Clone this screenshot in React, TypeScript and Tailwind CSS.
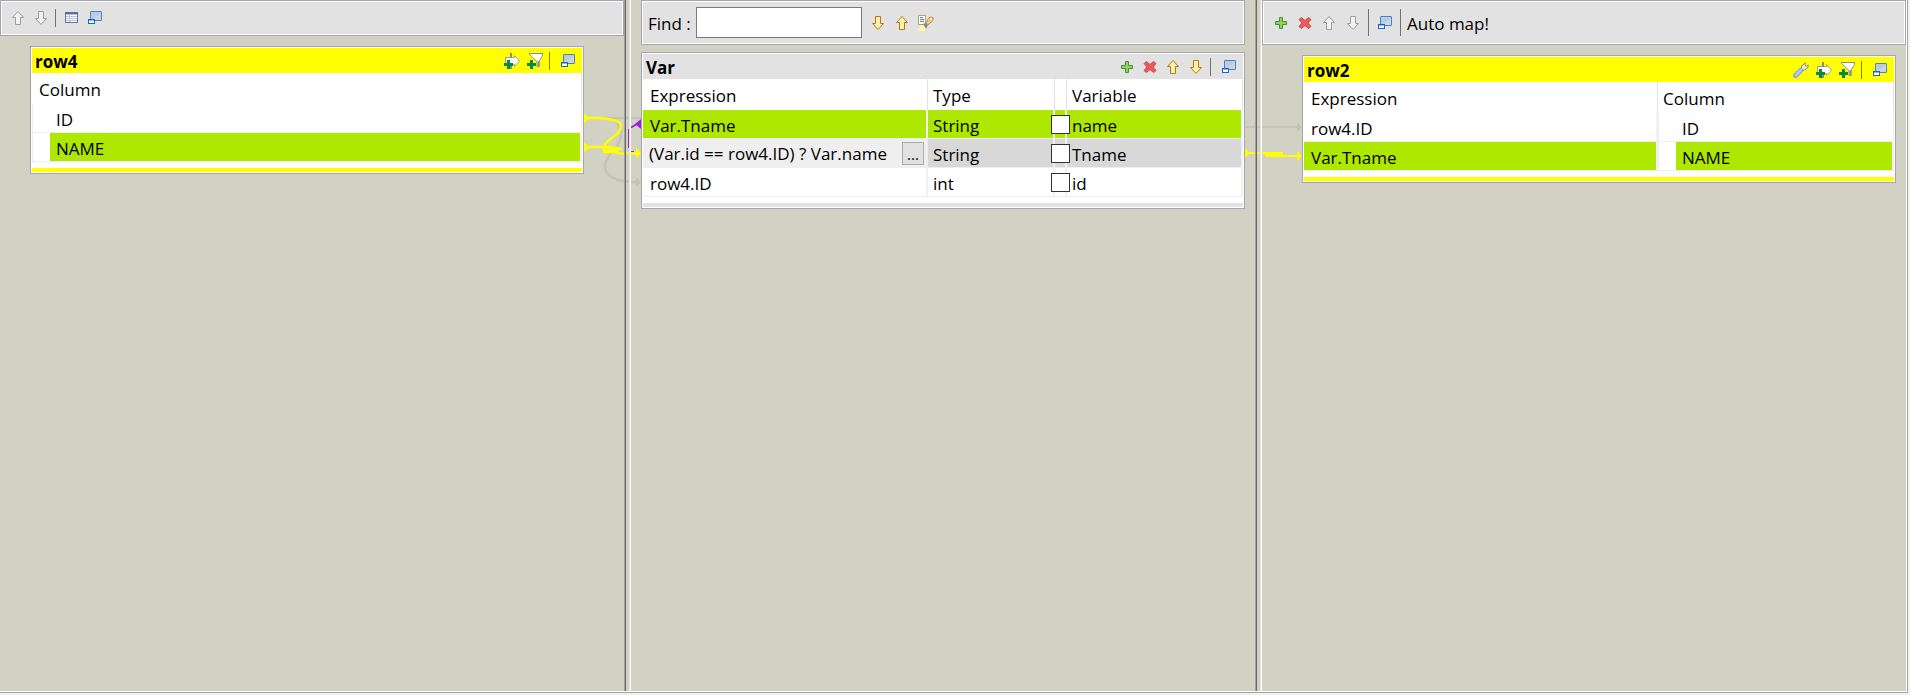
import React from "react";

type Tone = "gold" | "gray";

function Arrow({ dir, tone }: { dir: "up" | "down"; tone: Tone }) {
  const stroke = tone === "gold" ? "#b87a10" : "#9c9c9c";
  const fill = tone === "gold" ? "#fff0b0" : "#f2f2f2";
  const d =
    dir === "up"
      ? "M8 1.5 L13.5 7.5 H10.5 V14.5 H5.5 V7.5 H2.5 Z"
      : "M8 14.5 L13.5 8.5 H10.5 V1.5 H5.5 V8.5 H2.5 Z";
  return (
    <svg width="16" height="16" viewBox="0 0 16 16" aria-hidden="true">
      <path d={d} fill={fill} stroke={stroke} strokeLinejoin="round" />
    </svg>
  );
}

function Plus() {
  return (
    <svg width="16" height="16" viewBox="0 0 16 16" aria-hidden="true">
      <path d="M6.5 2.5h3v4h4v3h-4v4h-3v-4h-4v-3h4z" fill="#9fd04c" stroke="#3a9050" />
    </svg>
  );
}

function Cross() {
  return (
    <svg width="16" height="16" viewBox="0 0 16 16" aria-hidden="true">
      <path
        d="M4.5 2.5 L8 5.5 L11.5 2.5 L14 4.5 L11 8 L14 11.5 L11.5 13.5 L8 10.5 L4.5 13.5 L2 11.5 L5 8 L2 4.5 Z"
        fill="#ee5a5c"
        stroke="#d04a4c"
        strokeLinejoin="round"
      />
    </svg>
  );
}

function Restore() {
  return (
    <svg width="16" height="16" viewBox="0 0 16 16" aria-hidden="true">
      <rect x="3.5" y="1.5" width="11" height="9" rx="0.5" fill="#b9cbe0" stroke="#4a82c4" />
      <path d="M4 10 L14 3 V10z" fill="#cdd5de" />
      <rect x="1.5" y="9.5" width="6" height="4" fill="#fff" stroke="#1464d2" />
      <path d="M1 10h7" stroke="#1464d2" />
    </svg>
  );
}

function TableIcon() {
  return (
    <svg width="16" height="16" viewBox="0 0 16 16" aria-hidden="true">
      <rect x="1.5" y="2.5" width="12" height="10" fill="#fff" stroke="#60789f" />
      <path d="M1 3h13" stroke="#5d6f94" strokeWidth="2" />
      <path d="M2 4.5h11" stroke="#b4c0d4" />
      <path d="M2 6.5h11M2 8.5h11M2 10.5h11M5.5 4v8" stroke="#b9c5d8" />
    </svg>
  );
}

function AddArrow() {
  return (
    <svg width="16" height="16" viewBox="0 0 16 16" aria-hidden="true">
      <path d="M1.5 4.5H10.5V2.5L15.5 8L10.5 13.5V11.5H1.5z" fill="#fff" stroke="#a3a38a" />
      <path d="M7 0v5M7 12v4" stroke="#8c8c7a" strokeWidth="2" />
      <path d="M4.5 7v9M0 11.5h9" stroke="#078c3c" strokeWidth="3" />
    </svg>
  );
}

function AddFilter() {
  return (
    <svg width="16" height="16" viewBox="0 0 16 16" aria-hidden="true">
      <path d="M2.5 0.5H15.5V2.5L12 8.5V13.5H10V8.5L2.5 1.5Z" fill="#fff" stroke="#929286" />
      <path d="M2 0.5h14" stroke="#8e8e84" />
      <path d="M11.5 8v6" stroke="#8e8e84" strokeWidth="2" />
      <path d="M4.5 7v9M0 11.5h9" stroke="#078c3c" strokeWidth="3" />
    </svg>
  );
}

function Wrench() {
  return (
    <svg width="16" height="16" viewBox="0 0 16 16" aria-hidden="true">
      <path
        d="M8 8 L9 3.5 L12.5 0.8 L12 3.2 L13.4 4.2 L15.5 3.2 L14.6 6.2 L11.5 7.8 L9 9.2Z"
        fill="#e7e7e0"
        stroke="#918f80"
        strokeLinejoin="round"
      />
      <path d="M2.6 13.4 L7.6 8.4" stroke="#7f9fce" strokeWidth="5" strokeLinecap="round" />
      <path d="M2.8 13.2 L7.6 8.4" stroke="#b0caf0" strokeWidth="3" strokeLinecap="round" />
    </svg>
  );
}

function Highlight() {
  return (
    <svg width="16" height="16" viewBox="0 0 16 16" aria-hidden="true">
      <path d="M0.5 0.5h7v9h-7z" fill="#fff" stroke="#b8a060" />
      <path d="M2 2.5h3M2 4.5h4M2 6.5h4" stroke="#5a80bc" />
      <path d="M0 16 L2 11 L6 10 L8 12 L7 16Z" fill="#fff6b8" />
      <path d="M5 9 L8 7.5 L10 10 L8 14Z" fill="#8b8b8b" />
      <path d="M8.5 8.5 L9.5 4.5 L12 2 L15 2.5 L15 5.5 L12 8 L10 10Z" fill="#f3c385" stroke="#ca8c48" />
      <circle cx="13" cy="4" r="1" fill="#fff" />
    </svg>
  );
}

function Tool({ label, disabled, children }: { label: string; disabled?: boolean; children: React.ReactNode }) {
  return (
    <button type="button" aria-label={label} title={label} disabled={disabled} className="block size-4 shrink-0">
      {children}
    </button>
  );
}

function Divider({ className }: { className: string }) {
  return <span className={`-ml-px w-px shrink-0 bg-black/50 ${className}`} />;
}

function Toolbar({ className, children }: { className: string; children: React.ReactNode }) {
  return (
    <div
      className={`flex items-center border border-[#a5a5ad] bg-[#e2e2e2] shadow-[inset_0_0_0_1px_#fff] ${className}`}
    >
      {children}
    </div>
  );
}

function Card({
  title,
  tone,
  tools,
  className,
  children,
}: {
  title: string;
  tone: "yellow" | "gray";
  tools: React.ReactNode;
  className: string;
  children: React.ReactNode;
}) {
  const bar = tone === "yellow" ? "bg-[#ffff00]" : "bg-[#e2e2e2]";
  return (
    <section className={`border border-[#a5a5ad] bg-white p-px ${className}`}>
      <header className={`flex h-[25px] items-center justify-between pr-1.5 pl-[3px] ${bar}`}>
        <h2 className="pt-0.5 text-[17px] leading-6 font-bold">{title}</h2>
        <div className="flex items-center gap-[7px]">
          {tools}
          <Divider className="mr-[3px] h-[18px]" />
          <Tool label={`Minimize ${title}`}>
            <Restore />
          </Tool>
        </div>
      </header>
      {children}
      <div className={`mt-1.5 h-1 ${bar}`} />
    </section>
  );
}

const table = "w-full table-fixed border-separate border-spacing-0";
const th = "h-[31px] border-r border-[#e2e2e6] p-0 pt-0.5 text-left font-normal";
const td = "h-[29px] border-r-2 border-b border-r-[#edf1f8] border-b-[#ededf0] bg-clip-padding p-0 pt-1";
const first = "pl-[7px]";
const next = "pl-[5px]";
const green = "bg-[#aee800]";
const gray = "bg-[#d8d8d8]";

function ColumnCell({ name, selected }: { name: string; selected?: boolean }) {
  return (
    <td className="h-[29px] border-r border-b border-l border-[#ededf0] p-0 pr-px pl-[17px]">
      <div className={`h-7 pt-1 pl-1.5 ${selected ? "bg-[#aee800]" : ""}`}>{name}</div>
    </td>
  );
}

type Variable = { expression: string; type: string; name: string; state: "linked" | "editing" | "plain" };

const variables: Variable[] = [
  { expression: "Var.Tname", type: "String", name: "name", state: "linked" },
  { expression: "(Var.id == row4.ID) ? Var.name", type: "String", name: "Tname", state: "editing" },
  { expression: "row4.ID", type: "int", name: "id", state: "plain" },
];

function VariableRow({ expression, type, name, state }: Variable) {
  const fill = state === "linked" ? green : state === "editing" ? gray : "";
  return (
    <tr>
      {state === "editing" ? (
        <td className="h-[29px] bg-[#efefef] p-0">
          <div className="flex items-center justify-between pr-1 pl-1.5">
            <input
              aria-label="Expression"
              defaultValue={expression}
              className="h-7 min-w-0 flex-1 bg-transparent outline-none"
            />
            <button
              type="button"
              aria-label="Open expression editor"
              className="h-[23px] w-[22px] border border-[#adadad] bg-[#e1e1e1] text-[15px] leading-4"
            >
              ...
            </button>
          </div>
        </td>
      ) : (
        <td className={`${td} ${first} ${fill}`}>{expression}</td>
      )}
      <td className={`${td} ${next} ${fill}`}>{type}</td>
      <td className={`h-[29px] border-r-2 border-b border-r-[#edf1f8] border-b-[#ededf0] bg-clip-padding p-0 ${fill}`}>
        <input
          type="checkbox"
          aria-label={`Nullable ${name}`}
          className="relative -left-1 block size-[19px] max-w-none appearance-none border border-[#333] bg-white checked:bg-[#333]"
        />
      </td>
      <td className={`${td} ${next} ${fill}`}>{name}</td>
    </tr>
  );
}

function Sash({ children }: { children: React.ReactNode }) {
  return (
    <div className="relative">
      {children}
      <div className="relative h-full border-r border-l border-r-white border-l-[#a0a0a0]">
        <div className="h-full border-r border-l border-r-[#e3e3e3] border-l-[#696969]" />
      </div>
    </div>
  );
}

function InputLinks() {
  return (
    <svg
      className="pointer-events-none absolute top-[108px] -left-10"
      width="57"
      height="82"
      viewBox="0 0 57 82"
      fill="none"
      aria-hidden="true"
    >
      <g stroke="#c3c3b6" strokeWidth="2">
        <path d="M5 10H57" />
        <path d="M30 12C42 22 38 34 27 45C19 55 18 64 29 70C36 73 42 74 52 74" strokeWidth="2.5" />
      </g>
      <path d="M52 69L57 74L52 79z" fill="#c3c3b6" />
      <g stroke="#9b22d6">
        <path d="M44.5 21V40M47 43.5h3" />
        <path d="M47 19.5L53 16" strokeWidth="2" />
      </g>
      <path d="M57 11V21L51 16z" fill="#9b22d6" />
      <g stroke="#ffff00" strokeWidth="2.5">
        <path d="M4 10H16C25 11 30 12 34 13.5C38 16 38 20 34 25C30 29 24 32 20 38" />
        <path d="M4 39H26L38 41M20 38V44H32L36 45.5H53M20 42H34" />
      </g>
      <g fill="#ffff00">
        <path d="M0 5L5.5 10L0 15.5z" />
        <path d="M0 34L5.5 39L0 44.5z" />
        <path d="M52 39.5L57 45L52 50.5z" />
      </g>
    </svg>
  );
}

function OutputLinks() {
  return (
    <svg
      className="pointer-events-none absolute top-[120px] -left-2.5"
      width="57"
      height="42"
      viewBox="0 0 57 42"
      fill="none"
      aria-hidden="true"
    >
      <path d="M0 7H53" stroke="#c3c3b6" strokeWidth="2" />
      <path d="M52 2L57 7L52 12z" fill="#c3c3b6" />
      <path d="M4 33H38M20 35H38M21 36H53" stroke="#ffff00" strokeWidth="2" />
      <path d="M0 28L5 33L0 38zM52 31L57 36L52 41z" fill="#ffff00" />
    </svg>
  );
}

export default function App() {
  return (
    <div className="h-screen bg-[#f0f0f0] pr-0.5 pb-0.5 font-['Open_Sans','Noto_Sans',sans-serif] text-[17px] leading-6 text-black">
      <div className="h-full border-r border-b border-[#a5a5ad]">
        <main className="grid h-full grid-cols-[624fr_7px_624fr_7px_644fr] border-r border-b border-white bg-[#d1d1c4]">
          <section>
            <Toolbar className="h-9 gap-[7px] pl-[9px]">
              <Tool label="Move up" disabled>
                <Arrow dir="up" tone="gray" />
              </Tool>
              <Tool label="Move down" disabled>
                <Arrow dir="down" tone="gray" />
              </Tool>
              <Divider className="mr-px h-[18px]" />
              <Tool label="Table view">
                <TableIcon />
              </Tool>
              <Tool label="Minimize all">
                <Restore />
              </Tool>
            </Toolbar>
            <Card
              title="row4"
              tone="yellow"
              className="mt-2.5 mr-10 ml-[30px]"
              tools={
                <>
                  <Tool label="Add join">
                    <AddArrow />
                  </Tool>
                  <Tool label="Add filter">
                    <AddFilter />
                  </Tool>
                </>
              }
            >
              <table className={table}>
                <thead>
                  <tr>
                    <th className={`${th} ${first}`}>Column</th>
                  </tr>
                </thead>
                <tbody>
                  <tr>
                    <ColumnCell name="ID" />
                  </tr>
                  <tr>
                    <ColumnCell name="NAME" selected />
                  </tr>
                </tbody>
              </table>
            </Card>
          </section>

          <Sash>
            <InputLinks />
          </Sash>

          <section className="px-2.5">
            <Toolbar className="h-[45px] gap-2 pl-1.5">
              <div className="flex items-center">
                <label htmlFor="find" className="w-12 pt-0.5">
                  Find :
                </label>
                <input
                  id="find"
                  type="text"
                  className="h-[31px] w-[166px] border border-[#7a7a7a] bg-white px-1 outline-none"
                />
              </div>
              <Tool label="Find next">
                <Arrow dir="down" tone="gold" />
              </Tool>
              <Tool label="Find previous">
                <Arrow dir="up" tone="gold" />
              </Tool>
              <Tool label="Highlight matches">
                <Highlight />
              </Tool>
            </Toolbar>
            <Card
              title="Var"
              tone="gray"
              className="mt-[7px]"
              tools={
                <>
                  <Tool label="Add variable">
                    <Plus />
                  </Tool>
                  <Tool label="Remove variable">
                    <Cross />
                  </Tool>
                  <Tool label="Move variable up">
                    <Arrow dir="up" tone="gold" />
                  </Tool>
                  <Tool label="Move variable down">
                    <Arrow dir="down" tone="gold" />
                  </Tool>
                </>
              }
            >
              <table className={table}>
                <colgroup>
                  <col />
                  <col className="w-[127px]" />
                  <col className="w-3" />
                  <col className="w-44" />
                </colgroup>
                <thead>
                  <tr>
                    <th className={`${th} ${first}`}>Expression</th>
                    <th className={`${th} ${next}`}>Type</th>
                    <th className={th} aria-label="Nullable" />
                    <th className={`${th} ${next}`}>Variable</th>
                  </tr>
                </thead>
                <tbody>
                  {variables.map((variable) => (
                    <VariableRow key={variable.name} {...variable} />
                  ))}
                </tbody>
              </table>
            </Card>
          </section>

          <Sash>
            <OutputLinks />
          </Sash>

          <section>
            <Toolbar className="h-[45px] gap-2 pl-2.5">
              <Tool label="Add output">
                <Plus />
              </Tool>
              <Tool label="Remove output">
                <Cross />
              </Tool>
              <Tool label="Move output up" disabled>
                <Arrow dir="up" tone="gray" />
              </Tool>
              <Tool label="Move output down" disabled>
                <Arrow dir="down" tone="gray" />
              </Tool>
              <Divider className="h-[27px]" />
              <Tool label="Minimize all outputs">
                <Restore />
              </Tool>
              <button type="button" className="-ml-px h-[27px] border-l border-[#717171] pt-0.5 pl-1.5">
                Auto map!
              </button>
            </Toolbar>
            <Card
              title="row2"
              tone="yellow"
              className="mt-2.5 mr-2.5 ml-10"
              tools={
                <>
                  <Tool label="Output settings">
                    <Wrench />
                  </Tool>
                  <Tool label="Add output link">
                    <AddArrow />
                  </Tool>
                  <Tool label="Add output filter">
                    <AddFilter />
                  </Tool>
                </>
              }
            >
              <table className={table}>
                <colgroup>
                  <col />
                  <col className="w-[236px]" />
                </colgroup>
                <thead>
                  <tr>
                    <th className={`${th} ${first}`}>Expression</th>
                    <th className={`${th} ${next}`}>Column</th>
                  </tr>
                </thead>
                <tbody>
                  <tr>
                    <td className={`${td} ${first}`}>row4.ID</td>
                    <ColumnCell name="ID" />
                  </tr>
                  <tr>
                    <td className={`${td} ${first} ${green}`}>Var.Tname</td>
                    <ColumnCell name="NAME" selected />
                  </tr>
                </tbody>
              </table>
            </Card>
          </section>
        </main>
      </div>
    </div>
  );
}
